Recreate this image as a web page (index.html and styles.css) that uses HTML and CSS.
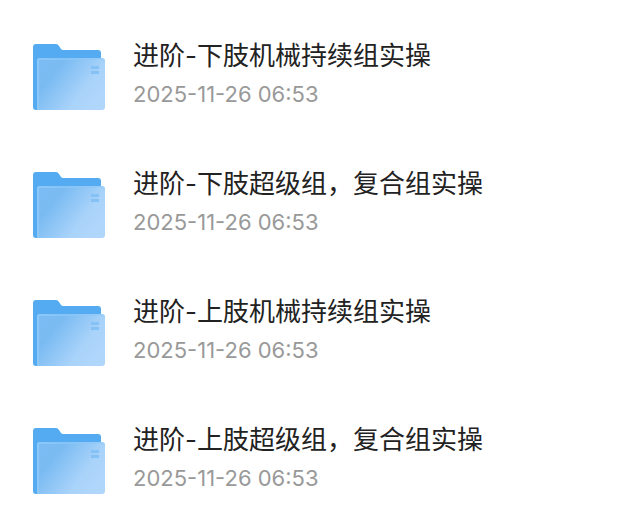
FILE: index.html
```html
<!DOCTYPE html>
<html lang="zh-CN">
<head>
<meta charset="UTF-8" />
<meta name="viewport" content="width=device-width, initial-scale=1" />
<title>文件夹</title>
<link rel="stylesheet" href="styles.css">
</head>
<body>

<!-- Shared folder icon -->
<svg class="icon-defs" width="0" height="0" aria-hidden="true">
  <defs>
    <linearGradient id="folder-front" gradientUnits="userSpaceOnUse" x1="8" y1="18" x2="62" y2="60">
      <stop offset="0" stop-color="#7abcf3" />
      <stop offset="0.25" stop-color="#7abbf2" />
      <stop offset="0.75" stop-color="#a9d3fa" />
      <stop offset="1" stop-color="#b0d6fb" />
    </linearGradient>
    <linearGradient id="folder-edge" gradientUnits="userSpaceOnUse" x1="4" y1="0" x2="71" y2="0">
      <stop offset="0" stop-color="#8cc7f8" />
      <stop offset="1" stop-color="#8cc7f8" stop-opacity="0.3" />
    </linearGradient>
    <symbol id="folder" viewBox="0 0 72 66">
      <path fill="#55abf1" d="M3 0h20q2 0 3 2l2 3q1 1 2 1h35q3 0 3 3v57H3q-3 0-3-3V3q0-3 3-3z" />
      <path fill="url(#folder-front)" d="M6 14h63q3 0 3 3v46q0 3-3 3H4V16q0-2 2-2z" />
      <path fill="none" stroke="url(#folder-edge)" stroke-width="2" d="M5 66V17q0-2 2-2h62q2 0 2 2" />
      <path fill="#84c1f5" d="M58 22h8v3h-8zM58 27h8v3h-8z" />
    </symbol>
  </defs>
</svg>

<ul class="file-list">
  <li class="file-item">
    <svg class="file-icon" aria-hidden="true"><use href="#folder" /></svg>
    <div class="file-info">
      <div class="file-name">进阶-下肢机械持续组实操</div>
      <time class="file-time" datetime="2025-11-26T06:53">2025-11-26 06:53</time>
    </div>
  </li>
  <li class="file-item">
    <svg class="file-icon" aria-hidden="true"><use href="#folder" /></svg>
    <div class="file-info">
      <div class="file-name">进阶-下肢超级组，复合组实操</div>
      <time class="file-time" datetime="2025-11-26T06:53">2025-11-26 06:53</time>
    </div>
  </li>
  <li class="file-item">
    <svg class="file-icon" aria-hidden="true"><use href="#folder" /></svg>
    <div class="file-info">
      <div class="file-name">进阶-上肢机械持续组实操</div>
      <time class="file-time" datetime="2025-11-26T06:53">2025-11-26 06:53</time>
    </div>
  </li>
  <li class="file-item">
    <svg class="file-icon" aria-hidden="true"><use href="#folder" /></svg>
    <div class="file-info">
      <div class="file-name">进阶-上肢超级组，复合组实操</div>
      <time class="file-time" datetime="2025-11-26T06:53">2025-11-26 06:53</time>
    </div>
  </li>
</ul>

</body>
</html>
```
FILE: styles.css
```css
body {
  margin: 0;
  background: #fff;
  font-family: Inter, "Noto Sans CJK SC", sans-serif;
}

.icon-defs {
  display: block;
}

/* File list */
.file-list {
  list-style: none;
  margin: 0;
  padding: 36px 32px 0 33px;
  display: flex;
  flex-direction: column;
  gap: 52px;
}

.file-item {
  display: flex;
  align-items: flex-start;
  gap: 28px;
}

.file-icon {
  flex: none;
  width: 72px;
  height: 66px;
  margin-top: 8px;
}

/* Name and date */
.file-name {
  font-size: 26px;
  line-height: 40px;
  color: #222;
}

.file-time {
  display: block;
  font-size: 22px;
  line-height: 36px;
  color: #999;
}
```
